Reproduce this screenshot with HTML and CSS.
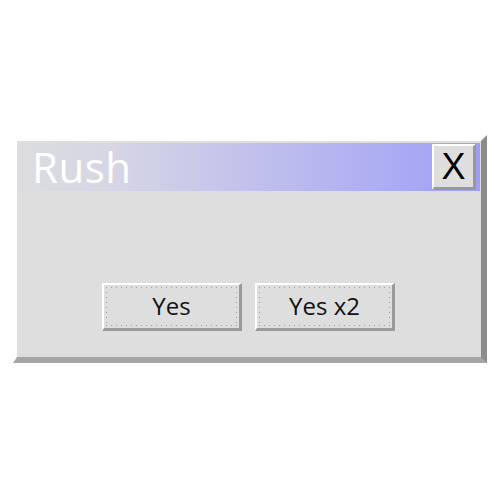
FILE: index.html
```html
<!DOCTYPE html>
<html>
<head>
<meta charset="utf-8">
<link rel="stylesheet" href="styles.css">
</head>
<body>
<div class="stage">
  <div class="window">
    <div class="titlebar">
      <span class="title">Rush</span>
      <button class="close">X</button>
    </div>
    <div class="content">
      <button class="btn"><span class="focus">Yes</span></button>
      <button class="btn"><span class="focus">Yes x2</span></button>
    </div>
  </div>
</div>
</body>
</html>
```

FILE: styles.css
```css
html, body {
  margin: 0;
  padding: 0;
  background: #ffffff;
}

.stage {
  padding: 135px 0 0 13px;
}

.window {
  box-sizing: border-box;
  width: 474px;
  height: 228px;
  border-style: solid;
  border-width: 6px 6px 6px 4px;
  border-color: transparent #8c8c8c #a6a6a6 transparent;
  background: #dedede;
  background-clip: padding-box;
  display: flex;
  flex-direction: column;
  padding: 2px 1px 0 0;
}

.titlebar {
  height: 48px;
  display: flex;
  align-items: center;
  justify-content: space-between;
  padding-left: 15px;
  background: linear-gradient(90deg, #dcdce0 0%, #d6d6e4 20%, #9e9ef8 100%);
}

.title {
  font-family: "Open Sans", sans-serif;
  font-size: 42px;
  line-height: 42px;
  letter-spacing: 0.5px;
  color: #ffffff;
}

.close {
  width: 44px;
  height: 46px;
  margin: 0 4px 0 0;
  padding: 0;
  background: #dedede;
  border-style: solid;
  border-width: 2px 3px 3px 2px;
  border-color: #ffffff #999999 #999999 #ffffff;
  font-family: "Liberation Sans", Arial, sans-serif;
  font-size: 36px;
  line-height: 36px;
  color: #000000;
  display: flex;
  align-items: center;
  justify-content: center;
}

.content {
  flex: 1;
  display: flex;
  justify-content: center;
  align-items: flex-start;
  gap: 13px;
  padding-top: 92px;
}

.btn {
  width: 140px;
  height: 48px;
  padding: 2px;
  margin: 0;
  background: #dedede;
  border-style: solid;
  border-width: 2px 3px 3px 2px;
  border-color: #ffffff #9a9a9a #9a9a9a #ffffff;
  box-sizing: border-box;
  display: flex;
}

.focus {
  flex: 1;
  display: flex;
  align-items: center;
  justify-content: center;
  padding-bottom: 2px;
  font-family: "Open Sans", sans-serif;
  font-size: 24px;
  color: #111111;
  background:
    repeating-linear-gradient(90deg, #9c9c9c 0 1px, transparent 1px 5px) top left / 100% 1px no-repeat,
    repeating-linear-gradient(90deg, #9c9c9c 0 1px, transparent 1px 5px) bottom left / 100% 1px no-repeat,
    repeating-linear-gradient(180deg, #9c9c9c 0 1px, transparent 1px 5px) top left / 1px 100% no-repeat,
    repeating-linear-gradient(180deg, #9c9c9c 0 1px, transparent 1px 5px) top right / 1px 100% no-repeat;
}
```
